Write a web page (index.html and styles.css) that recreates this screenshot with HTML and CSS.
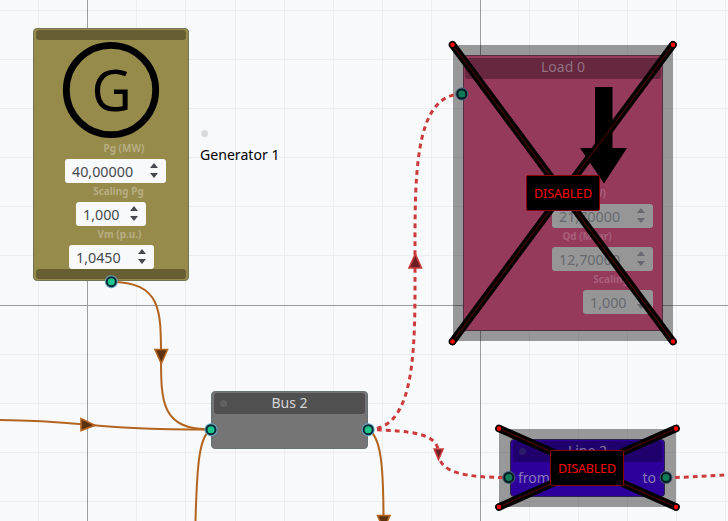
FILE: index.html
```html
<!DOCTYPE html>
<html lang="en">
<head>
<meta charset="utf-8">
<title>Network editor</title>
<link rel="stylesheet" href="styles.css">
</head>
<body>
<main class="canvas">
  <svg class="layer" viewBox="0 0 728 521">
    <g class="grid-minor">
      <path d="M38.5 0V521M136.5 0V521M185.5 0V521M235.5 0V521M284.5 0V521M333.5 0V521M382.5 0V521M431.5 0V521M529.5 0V521M578.5 0V521M627.5 0V521M676.5 0V521M725.5 0V521"/>
      <path d="M0 10.500H728M0 59.500H728M0 108.500H728M0 157.500H728M0 206.500H728M0 255.500H728M0 354.500H728M0 403.500H728M0 452.500H728M0 501.500H728"/>
    </g>
    <path class="grid-major" d="M87.500 0V521M480.500 0V521M0 305.500H728"/>
    <g class="wire">
      <path d="M111 282C161 282 161 310 161 356S161 429.500 211 429.500"/>
      <path d="M0 420C90 421 90 429.500 211 429.500"/>
      <path d="M211 429.500C199 436 197 466 195.500 521"/>
      <path d="M368 429.500C381 436 383.500 466 383.500 521"/>
    </g>
    <g class="wire-arrow">
      <path d="M155 349.500H167.500L161.300 363.500Z"/>
      <path d="M81 418.500V430.500L95 425.300Z"/>
      <path d="M377.500 515.500H390L383.700 529.500Z"/>
    </g>
  </svg>

  <section class="node generator">
    <div class="bar"></div>
    <svg class="symbol" viewBox="0 0 98 98">
      <circle cx="49" cy="49" r="44.700"/>
      <text transform="translate(49.500 69.500) scale(.97 1)" text-anchor="middle">G</text>
    </svg>
    <div class="label pg">Pg (MW)</div>
    <div class="spin wide">40,00000<i class="arrows"></i></div>
    <div class="label scaling">Scaling Pg</div>
    <div class="spin small">1,000<i class="arrows"></i></div>
    <div class="label vm">Vm (p.u.)</div>
    <div class="spin medium">1,0450<i class="arrows"></i></div>
    <div class="bar bottom"></div>
  </section>
  <div class="caption"><i class="dot"></i><span>Generator 1</span></div>

  <section class="node bus"><div class="title"><i class="dot"></i>Bus 2</div></section>

  <div class="shade load-shade"></div>
  <section class="node load">
    <div class="title">Load 0</div>
    <svg class="down" viewBox="0 0 48 98"><path d="M15 0H32.500V61H47L24 96.500L0 61H15Z"/></svg>
    <div class="label pd">Pd (MW)</div>
    <div class="spin wide">21,70000<i class="arrows"></i></div>
    <div class="label qd">Qd (Mvar)</div>
    <div class="spin wide">12,70000<i class="arrows"></i></div>
    <div class="label sc">Scaling</div>
    <div class="spin small">1,000<i class="arrows"></i></div>
  </section>

  <div class="shade line-shade"></div>
  <section class="node line">
    <div class="title"><i class="dot"></i>Line 2</div>
    <div class="ports"><span>from</span><span>to</span></div>
  </section>

  <svg class="layer" viewBox="0 0 728 521">
    <g class="wire-off">
      <path d="M368 429.500C417 429.500 415 345 415 262S413 95 461.500 94"/>
      <path d="M368 429.500C412 431 438 433 438.500 453S465 477.500 509 477.500"/>
      <path d="M666 477.500C690 477.500 710 475.500 728 475"/>
    </g>
    <g class="arrow-off">
      <path d="M409 268H421.500L415.300 254Z"/>
      <path d="M434.200 449H443L438.500 459.500Z"/>
    </g>
    <g class="cross-edge"><path d="M452.500 44.800L673 341.500M673 44.800L452.500 341.500M499 428.500L676 507M676 428.500L499 507"/></g>
    <g class="cross-core"><path d="M452.500 44.800L673 341.500M673 44.800L452.500 341.500M499 428.500L676 507M676 428.500L499 507"/></g>
    <g class="cross-end">
      <circle cx="452.500" cy="44.800" r="2.900"/><circle cx="673" cy="44.800" r="2.900"/>
      <circle cx="452.500" cy="341.500" r="2.900"/><circle cx="673" cy="341.500" r="2.900"/>
      <circle cx="499" cy="428.500" r="2.900"/><circle cx="676" cy="428.500" r="2.900"/>
      <circle cx="499" cy="507" r="2.900"/><circle cx="676" cy="507" r="2.900"/>
    </g>
    <g class="port-halo">
      <circle cx="111.300" cy="281.700" r="6.500"/><circle cx="211" cy="429.700" r="6.500"/><circle cx="368.200" cy="429.700" r="6.500"/>
    </g>
    <g class="port">
      <circle cx="111.300" cy="281.700" r="4.500"/><circle cx="211" cy="429.700" r="4.500"/><circle cx="368.200" cy="429.700" r="4.500"/>
    </g>
    <g class="port-halo off">
      <circle cx="461.800" cy="94" r="6.500"/><circle cx="508.800" cy="477.500" r="6.500"/><circle cx="666" cy="477.500" r="6.500"/>
    </g>
    <g class="port off">
      <circle cx="461.800" cy="94" r="4.500"/><circle cx="508.800" cy="477.500" r="4.500"/><circle cx="666" cy="477.500" r="4.500"/>
    </g>
  </svg>
  <div class="disabled load-tag">DISABLED</div>
  <div class="disabled line-tag">DISABLED</div>
</main>
</body>
</html>
```
FILE: styles.css
```css
* { box-sizing: border-box; }
body { margin: 0; }
.canvas {
  position: relative;
  width: 728px;
  height: 521px;
  overflow: hidden;
  background: #f8f9fb;
  font-family: "Noto Sans", sans-serif;
}
.layer { position: absolute; inset: 0; width: 728px; height: 521px; fill: none; }
.grid-minor { stroke: #eceef0; }
.grid-major { stroke: #9b9c9e; }
.wire { stroke: #b3641f; stroke-width: 2; }
.wire-arrow { fill: #5c3210; stroke: #b3641f; stroke-width: 1.6; }
.wire-off { stroke: #cb3b3b; stroke-width: 3; stroke-dasharray: 4.8 4.100; stroke-linecap: butt; }
.arrow-off { fill: #6c2024; stroke: #cb3b3b; stroke-width: 1.6; }
.cross-edge { stroke: #000; stroke-width: 7.600; stroke-linecap: round; }
.cross-core { stroke: #760000; stroke-width: .8; }
.cross-end { fill: #ff0000; stroke: #000; stroke-width: 1.200; }
.port-halo { fill: #6aa5c4; }
.port-halo.off { fill: #426478; }
.port { fill: #1cc78e; stroke: #062b35; stroke-width: 2; }
.port.off { fill: #117a58; stroke: #041a20; }

.node { position: absolute; display: flex; flex-direction: column; border-radius: 4px; }
.generator {
  left: 33px; top: 28px; width: 156px; height: 253px;
  padding: 1px 2px 0;
  background: #968b4b;
  border: 1px solid #717456;
}
.bar { height: 10px; flex: none; border-radius: 3px; background: #675f33; }
.bar.bottom { margin-top: auto; margin-bottom: 1px; }
.symbol { width: 98px; height: 98px; flex: none; margin: 1px 0 0 26px; fill: none; stroke: #000; stroke-width: 6.800; }
.symbol text { font-size: 57px; fill: #000; stroke: none; }
.label { height: 19px; flex: none; font-size: 10px; line-height: 18px; font-weight: 700; color: #b7ae82; text-align: center; white-space: nowrap; }
.spin {
  display: flex; align-items: center; justify-content: space-between; flex: none;
  height: 24px; padding: 1px 8px 0 7px;
  border-radius: 3px;
  background: #f8f9fb;
  color: #45484d;
  font-size: 14.300px; letter-spacing: 0; line-height: 23px;
}
.wide { width: 101px; }
.small { width: 70px; }
.medium { width: 85px; }
.arrows { width: 8px; height: 15px; margin-top: -1px; display: flex; flex-direction: column; justify-content: space-between; }
.arrows::before, .arrows::after { content: ""; border: 4px solid transparent; }
.arrows::before { border-top: 0; border-bottom: 5px solid currentColor; }
.arrows::after { border-bottom: 0; border-top: 5px solid currentColor; }
.generator .spin { margin-left: 29px; position: relative; top: .5px; }
.generator .small { margin-left: 40px; }
.generator .medium { margin-left: 33px; }
.pg { margin-left: 26px; }
.scaling { margin-left: 15px; }
.vm { margin-left: 17px; }

.caption { position: absolute; left: 200px; top: 130px; display: flex; flex-direction: column; gap: 8px; font-size: 14.100px; line-height: 20px; color: #000; }
.dot { width: 7px; height: 7px; border-radius: 50%; background: #d8dada; }
.caption .dot { margin-left: 1px; }

.title { position: relative; display: flex; align-items: center; justify-content: center; flex: none; height: 21px; padding-bottom: 1px; border-radius: 3px; font-size: 14px; line-height: 18px; }
.title .dot { position: absolute; left: 6px; top: 7px; }
.bus { left: 211px; top: 391px; width: 157px; height: 58px; padding: 1px; background: #757575; border: 1px solid #667173; }
.bus .title { margin: 0 1px; background: #505050; color: #d5d5d5; }
.bus .dot { background: #616161; }

.shade { position: absolute; background: rgba(0, 0, 0, .39); }
.load-shade { left: 453px; top: 45px; width: 220px; height: 296px; }
.line-shade { left: 499px; top: 429px; width: 177px; height: 78px; }

.load { left: 463px; top: 55px; width: 200px; height: 276px; padding: 2px 1px; background: #963a5c; border: 1px solid #4f3040; border-radius: 1px; }
.load .title { padding-bottom: 3px; background: #66273f; color: #92707f; }
.down { width: 48px; height: 98px; flex: none; margin: 8px 0 0 115px; }
.load .label { color: #a75f7b; }
.load .spin { background: #969697; color: #67696e; align-self: flex-end; margin-right: 8px; position: relative; top: .5px; }
.pd { margin: -1px 0 0 45px; }
.qd { margin-left: 48px; }
.sc { margin-left: 96px; }

.line { left: 510px; top: 439px; width: 155px; height: 58px; padding: 1px; background: #2e009b; border: 1px solid #2b2545; }
.line .title { margin: 0 1px; background: #20006c; color: #85789e; }
.line .dot { background: #2d1a69; }
.ports { display: flex; justify-content: space-between; padding: 5px 7px 0 6px; font-size: 14px; line-height: 21px; color: #8878b9; }

.disabled {
  position: absolute; width: 74px; height: 36px;
  border: 1px solid #8a0000; border-radius: 2px;
  background: #000; color: #ff0000;
  font-size: 12.500px; line-height: 35px; letter-spacing: -.15px; text-align: center;
}
.load-tag { left: 526px; top: 175px; }
.line-tag { left: 550px; top: 450px; }
```
